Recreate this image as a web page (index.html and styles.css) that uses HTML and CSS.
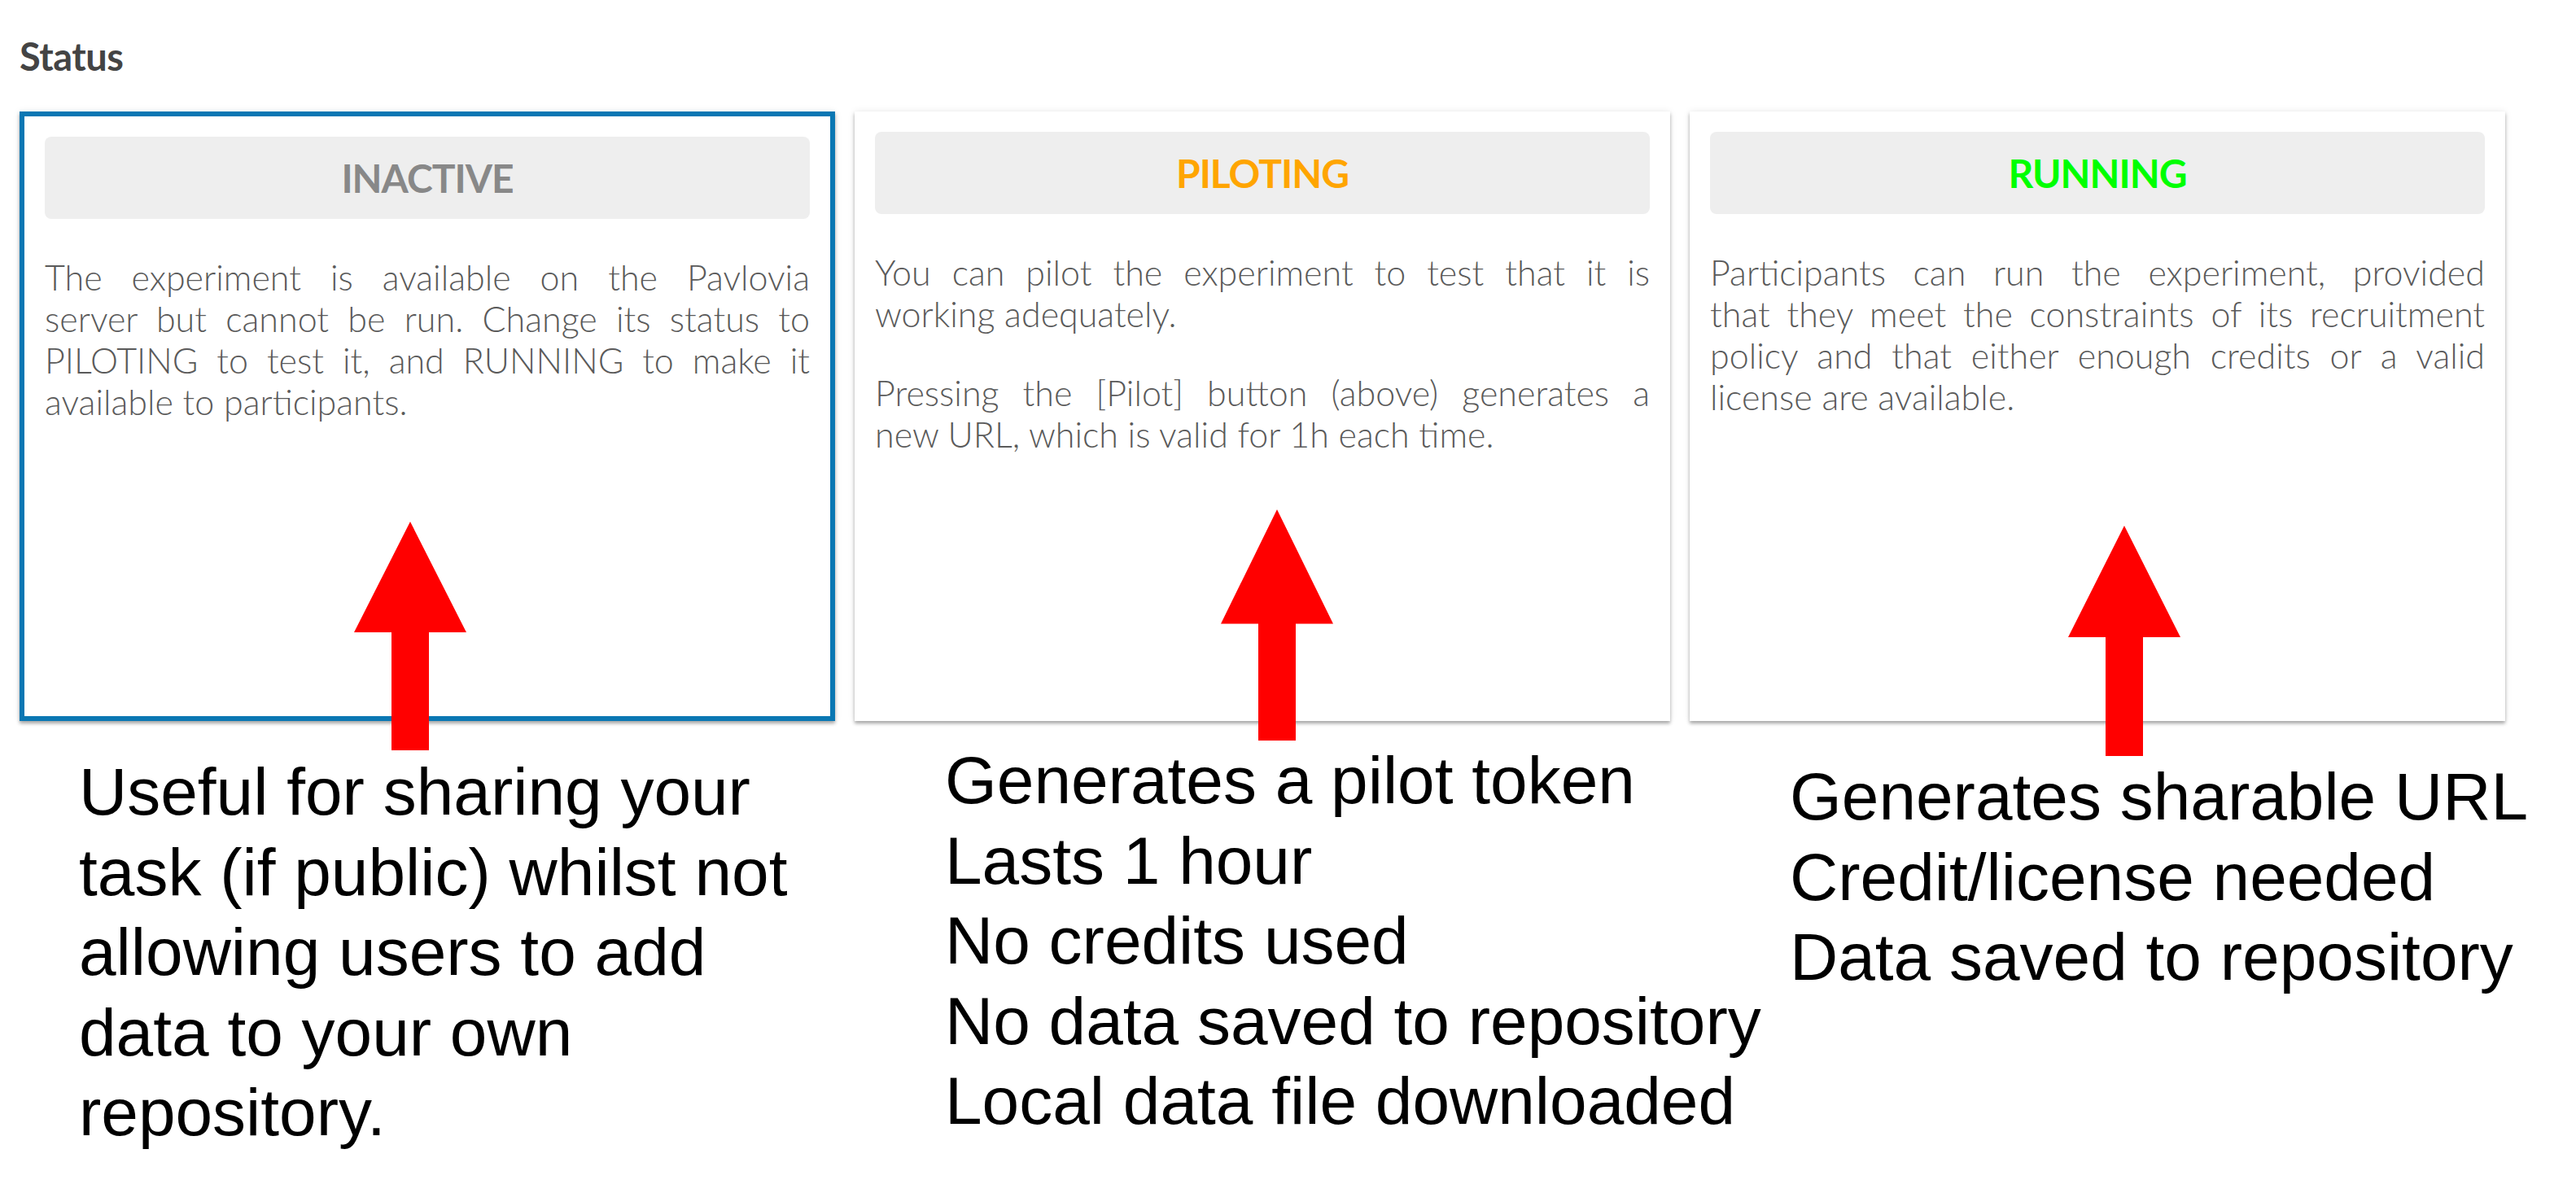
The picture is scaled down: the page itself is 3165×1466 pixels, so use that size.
FILE: index.html
```html
<!DOCTYPE html>
<html lang="en">
<head>
<meta charset="utf-8">
<title>Status</title>
<link rel="stylesheet" href="styles.css">
</head>
<body>
<main class="page">
  <h2 class="section-title">Status</h2>
  <div class="status-grid">
    <section class="col col--inactive">
      <div class="card card--selected">
        <div class="card-head head--inactive">INACTIVE</div>
        <div class="card-body">
          <p>
            <span class="jl">The experiment is available on the Pavlovia</span>
            <span class="jl">server but cannot be run. Change its status to</span>
            <span class="jl">PILOTING to test it, and RUNNING to make it</span>
            <span class="ll">available to participants.</span>
          </p>
        </div>
      </div>
      <svg class="arrow arrow--1" viewBox="0 0 138 283" preserveAspectRatio="none" aria-hidden="true"><polygon points="69,0 138,137 92,137 92,283 46,283 46,137 0,137"/></svg>
      <div class="note note--1">Useful for sharing your<br>task (if public) whilst not<br>allowing users to add<br>data to your own<br>repository.</div>
    </section>

    <section class="col col--piloting">
      <div class="card">
        <div class="card-head head--piloting">PILOTING</div>
        <div class="card-body">
          <p>
            <span class="jl">You can pilot the experiment to test that it is</span>
            <span class="ll">working adequately.</span>
          </p>
          <p>
            <span class="jl">Pressing the [Pilot] button (above) generates a</span>
            <span class="ll">new URL, which is valid for 1h each time.</span>
          </p>
        </div>
      </div>
      <svg class="arrow arrow--2" viewBox="0 0 138 283" preserveAspectRatio="none" aria-hidden="true"><polygon points="69,0 138,140 92,140 92,283 46,283 46,140 0,140"/></svg>
      <div class="note note--2">Generates a pilot token<br>Lasts 1 hour<br>No credits used<br>No data saved to repository<br>Local data file downloaded</div>
    </section>

    <section class="col col--running">
      <div class="card">
        <div class="card-head head--running">RUNNING</div>
        <div class="card-body">
          <p>
            <span class="jl">Participants can run the experiment, provided</span>
            <span class="jl">that they meet the constraints of its recruitment</span>
            <span class="jl">policy and that either enough credits or a valid</span>
            <span class="ll">license are available.</span>
          </p>
        </div>
      </div>
      <svg class="arrow arrow--3" viewBox="0 0 138 283" preserveAspectRatio="none" aria-hidden="true"><polygon points="69,0 138,137 92,137 92,283 46,283 46,137 0,137"/></svg>
      <div class="note note--3">Generates sharable URL<br>Credit/license needed<br>Data saved to repository</div>
    </section>
  </div>
</main>
</body>
</html>
```

FILE: styles.css
```css
* { box-sizing: border-box; }

html, body {
  margin: 0;
  padding: 0;
  background: #ffffff;
}

body {
  font-family: "Lato", "Open Sans", "Liberation Sans", sans-serif;
  color: #555555;
}

.page {
  padding: 42px 87px 0 24px;
}

.section-title {
  margin: 0;
  font-family: "Lato", "Liberation Sans", sans-serif;
  font-size: 47px;
  line-height: 54px;
  font-weight: 700;
  color: #444444;
  letter-spacing: -0.5px;
}

.status-grid {
  margin-top: 41px;
  display: grid;
  grid-template-columns: repeat(3, minmax(0, 1fr));
  column-gap: 24px;
  align-items: start;
}

.col {
  position: relative;
  min-width: 0;
}

.card {
  height: 749px;
  background: #ffffff;
  padding: 25px;
  box-shadow: 0 3px 4px rgba(0, 0, 0, 0.32), 0 0 9px rgba(0, 0, 0, 0.08);
}

.card--selected {
  border: 6px solid #0a77b3;
}

.card-head {
  height: 101px;
  line-height: 101px;
  background: #eeeeee;
  border-radius: 8px;
  text-align: center;
  font-size: 48px;
  font-weight: 700;
  letter-spacing: -1px;
}

.head--inactive { color: #888888; }
.head--piloting { color: #ffa500; }
.head--running  { color: #00ff00; }

.card-body p {
  margin: 46px 0 0;
  font-size: 43px;
  line-height: 51px;
  font-weight: 300;
  color: #5a5a5a;
}

.jl {
  display: block;
  text-align: justify;
  text-align-last: justify;
}

.ll {
  display: block;
  text-align: left;
}

.arrow {
  position: absolute;
  width: 138px;
  fill: #ff0000;
}

.arrow--1 { left: 411px; top: 504px; height: 281px; }
.arrow--2 { left: 450px; top: 489px; height: 284px; }
.arrow--3 { left: 465px; top: 509px; height: 283px; }

.note {
  font-family: "Liberation Sans", Arial, sans-serif;
  font-size: 82px;
  line-height: 98.5px;
  color: #000000;
  white-space: nowrap;
}

.note--1 { margin-top: 38px; padding-left: 73px; }
.note--2 { margin-top: 24px; padding-left: 111px; }
.note--3 { margin-top: 44px; padding-left: 123px; }
```
